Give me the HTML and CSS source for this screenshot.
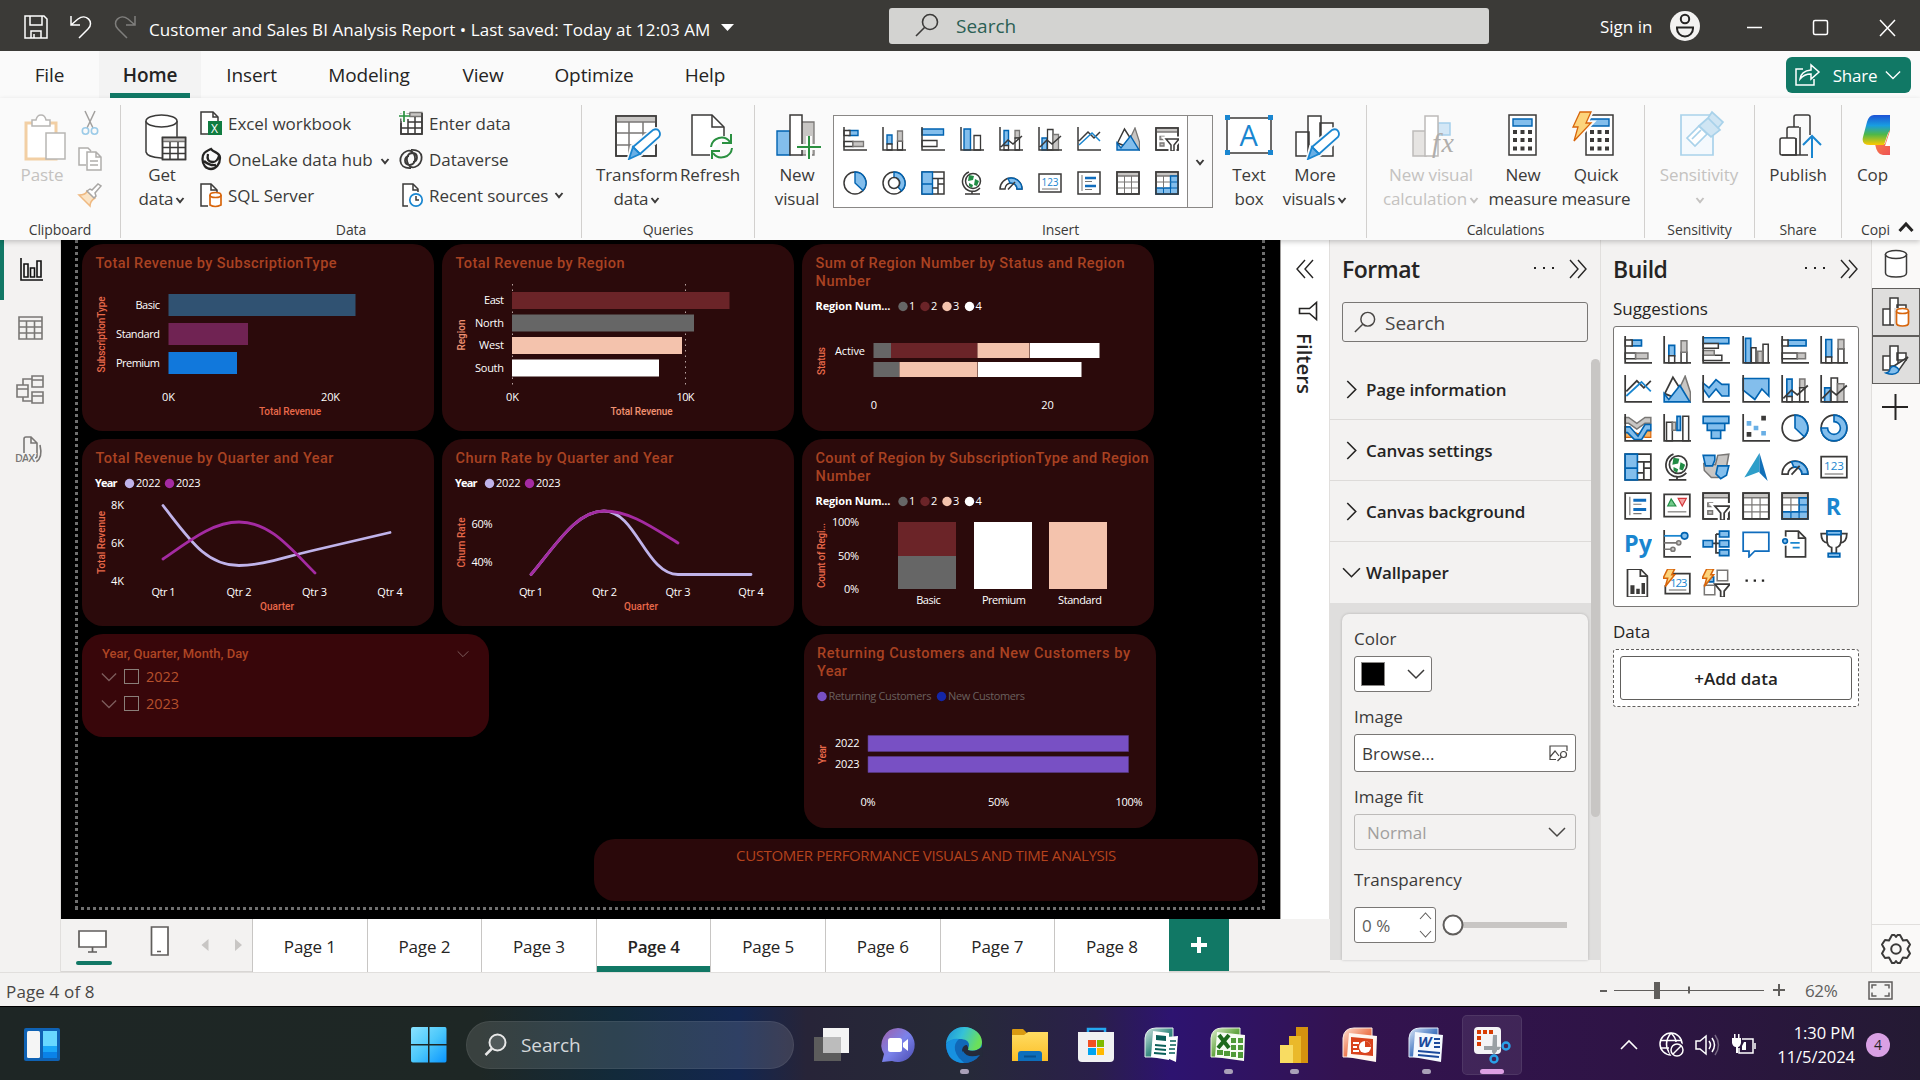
FILE: index.html
```html
<!DOCTYPE html>
<html lang="en">
<head>
<meta charset="utf-8">
<title>Customer and Sales BI Analysis Report</title>
<link rel="stylesheet" href="styles.css">
</head>
<body>
<svg class="defs" width="0" height="0" aria-hidden="true">
  <defs>
    <linearGradient id="gWin" x1="0" y1="0" x2="1" y2="1"><stop offset="0" stop-color="#8be3ff"/><stop offset=".5" stop-color="#4cc8fb"/><stop offset="1" stop-color="#0a95ff"/></linearGradient>
    <linearGradient id="gChat" x1="0" y1="0" x2="1" y2="1"><stop offset="0" stop-color="#a05fa8"/><stop offset=".5" stop-color="#7b83eb"/><stop offset="1" stop-color="#4a4bb0"/></linearGradient>
    <linearGradient id="gEdge" x1="0" y1="0" x2="1" y2=".3"><stop offset="0" stop-color="#1a8fd8"/><stop offset=".5" stop-color="#35c1d8"/><stop offset="1" stop-color="#6be05a"/></linearGradient>
    <linearGradient id="gFold" x1="0" y1="0" x2="0" y2="1"><stop offset="0" stop-color="#ffdc62"/><stop offset="1" stop-color="#fcbf27"/></linearGradient>
    <linearGradient id="gCop" x1="0" y1="0" x2="0" y2="1"><stop offset="0" stop-color="#1d52d6"/><stop offset=".35" stop-color="#189de0"/><stop offset=".65" stop-color="#4fb848"/><stop offset="1" stop-color="#ffc800"/></linearGradient>
    <linearGradient id="gCop2" x1="0" y1="0" x2="1" y2="1"><stop offset="0" stop-color="#ff9a3c"/><stop offset="1" stop-color="#e8395f"/></linearGradient>
    <linearGradient id="gPub" x1="0" y1="0" x2="1" y2="1"><stop offset="0" stop-color="#d5e8e5"/><stop offset=".5" stop-color="#3d8d84"/><stop offset="1" stop-color="#0a5f59"/></linearGradient>
    <linearGradient id="gXl" x1="0" y1="0" x2="1" y2="1"><stop offset="0" stop-color="#e2f1d2"/><stop offset=".5" stop-color="#68a845"/><stop offset="1" stop-color="#2b7a1f"/></linearGradient>
    <linearGradient id="gPpt" x1="0" y1="0" x2="1" y2="1"><stop offset="0" stop-color="#fde0d3"/><stop offset=".5" stop-color="#ef8059"/><stop offset="1" stop-color="#d8401a"/></linearGradient>
    <linearGradient id="gWd" x1="0" y1="0" x2="1" y2="1"><stop offset="0" stop-color="#dce7f7"/><stop offset=".5" stop-color="#4c7dc4"/><stop offset="1" stop-color="#143f8e"/></linearGradient>
  </defs>
</svg>
<svg class="symbols" aria-hidden="true">
  <symbol id="stackbar" viewBox="0 0 24 24"><path class="b" d="M6 3.500h9v5H6z"/><path class="w" d="M1 3.500h6v5H1zM1 14.500h9v5H1z"/><path class="g" d="M10 14.500h10.500v5H10z"/><path class="k" d="M1 0v23h23"/></symbol>
  <symbol id="stackcol" viewBox="0 0 24 24"><path class="b" d="M5 8h5v9H5z"/><path class="w" d="M5 17h5v6H5zM15.500 14h5v9h-5z"/><path class="g" d="M15.500 4h5v10h-5z"/><path class="k" d="M1 0v23h23"/></symbol>
  <symbol id="clusbar" viewBox="0 0 24 24"><path class="b" d="M1 2h21.500v6H1z"/><path class="w" d="M1 13.500h15v6H1z"/><path class="k" d="M1 0v23h23"/></symbol>
  <symbol id="clusbar2" viewBox="0 0 24 24"><path class="b" d="M1 1.500h22v5H1z"/><path class="w" d="M1 6.500h13v4H1zM1 16.500h16v4.500H1z"/><path class="g" d="M1 12.500h9.500v4H1z"/><path class="k" d="M1 0v23h23"/></symbol>
  <symbol id="cluscol" viewBox="0 0 24 24"><path class="b" d="M4 2h6.500v21H4z"/><path class="w" d="M14 8.500h6.500v14.500H14z"/><path class="k" d="M1 0v23h23"/></symbol>
  <symbol id="cluscol2" viewBox="0 0 24 24"><path class="b" d="M3 2h4.500v21H3z"/><path class="w" d="M8 10h4v13H8zM18 7h4.500v16H18z"/><path class="g" d="M13.500 13h4v10h-4z"/><path class="k" d="M1 0v23h23"/></symbol>
  <symbol id="fullbar" viewBox="0 0 24 24"><path class="b" d="M6 3.500h15.500v5H6z"/><path class="w" d="M1 3.500h5v5H1zM1 14.500h13v5H1z"/><path class="g" d="M14 14.500h7v5h-7z"/><path class="k" d="M1 0v23h23"/></symbol>
  <symbol id="fullcol" viewBox="0 0 24 24"><path class="b" d="M5 3h5v15H5z"/><path class="w" d="M5 18h5v5H5zM15.500 11h5v12h-5z"/><path class="g" d="M15.500 3h5v8h-5z"/><path class="k" d="M1 0v23h23"/></symbol>
  <symbol id="linestack" viewBox="0 0 24 24"><path class="b" d="M5 3.500h4.500v15H5z"/><path class="g" d="M16 3.500h4.500v7.500H16z"/><path class="w" d="M5 18.500h4.500V23H5zM16 11h4.500v12H16z"/><path class="k" d="M1 0v23h23M2 20l7-7 5 4 9-8"/></symbol>
  <symbol id="linecol" viewBox="0 0 24 24"><path class="b" d="M4 11h5v12H4z"/><path class="w" d="M9.500 2.500h5.500V23H9.500z"/><path class="g" d="M15 7.500h5.500V23H15z"/><path class="k" d="M1 0v23h23M2 20l7-7 5 4 9-8"/></symbol>
  <symbol id="line" viewBox="0 0 24 24"><path class="k" d="M1 0v23h23M2 14l9-9 6 6 6-6"/><path class="bl" d="M2 18l13-12 8 8"/></symbol>
  <symbol id="area" viewBox="0 0 24 24"><path class="g" d="M12 16l7-15 4.500 14v8z"/><path class="kw" d="M1.500 16L8.500 2l7 11-4 7z"/><path class="b" d="M1 23v-7l4 5 9.500-12L23 23z"/></symbol>
  <symbol id="stackarea" viewBox="0 0 24 24"><path class="b" d="M1 7l5 4 6-7 5 4h6v10h-6l-5-6-6 7-5-7z"/><path class="k" d="M1 0v23h23"/></symbol>
  <symbol id="fullarea" viewBox="0 0 24 24"><path class="b" d="M1 3h22v15l-6-6-6 9-10-8z"/><path class="k" d="M1 0v23h23"/></symbol>
  <symbol id="ribbonc" viewBox="0 0 24 24"><path class="o" d="M1 14h5l12 6h5v-5l-5-1-12 6H1z"/><path class="g" d="M1 3h3l7 5 7-5h5v5h-5l-7 5-7-5H1z"/><path class="b" d="M1 11h4l7 8 6-10h5v5h-3l-5 8H9l-6-6H1z"/><path class="k" d="M1 0v23h23"/></symbol>
  <symbol id="waterfall" viewBox="0 0 24 24"><path class="w" d="M3 7h5v16H3zM17 2h5v21h-5z"/><path class="g" d="M8 7h3v7H8z"/><path class="b" d="M12 2h3v12h-3z"/><path class="k" d="M1 0v23h23"/></symbol>
  <symbol id="funnelc" viewBox="0 0 24 24"><path class="b" d="M1 2h22v6H1zM4.500 8h15v6h-15zM8 14h8v7H8z"/></symbol>
  <symbol id="scatter" viewBox="0 0 24 24"><path class="k" d="M1 0v23h23"/><path fill="#3b3a39" d="M16.500 1.500h4v4h-4zM4 15.500h4v4H4z"/><path fill="#69afe5" d="M4 6h4v4H4zM10 10h4v4h-4zM16.500 14.500h4v4h-4z"/></symbol>
  <symbol id="pie" viewBox="0 0 24 24"><circle class="kw" cx="12" cy="12" r="11"/><path class="b" d="M12 1a11 11 0 0 1 8 18.500L12 12z"/></symbol>
  <symbol id="donut" viewBox="0 0 24 24"><circle class="kw" cx="12" cy="12" r="11"/><path class="b" d="M12 1a11 11 0 0 1 7.500 19l-3.500-4A5.500 5.500 0 0 0 12 6.500z"/><circle class="kw" cx="12" cy="12" r="5.500"/></symbol>
  <symbol id="donut2" viewBox="0 0 24 24"><circle class="kw" cx="12" cy="12" r="11"/><path class="b" d="M12 1a11 11 0 1 1-11 11h5.500a5.500 5.500 0 1 0 5.500-5.500z"/></symbol>
  <symbol id="treemap" viewBox="0 0 24 24"><path class="kw" d="M1 1h22v22H1z"/><path class="b" d="M1 1h10.500v22H1zM1 13h10.500"/><path class="k" d="M11.500 7.500H23M17 7.500V23M11.500 17H17M17 13h6"/></symbol>
  <symbol id="globe" viewBox="0 0 24 24"><circle class="kw" cx="13" cy="10" r="7.500"/><path fill="#218c45" d="M9 4l5 1-1 4-5 1zM15 8l4 2-2 5-3-1zM9 12l4 2-1 3-3-2z"/><path class="k" d="M9 1a10 10 0 1 0 11 16M12 20v3M5 23h15"/></symbol>
  <symbol id="shapemap" viewBox="0 0 24 24"><path class="g" d="M1.500 9l10 1 2-8 9.500-1-2 11-7 9H8l-6-6z"/><path class="b" d="M1 2h10v4l-2 5H3zM13.500 11H23l-2 8-5 3-4-4z"/></symbol>
  <symbol id="azure" viewBox="0 0 24 24"><path fill="#2d9ec9" d="M15 0v16L2 21z"/><path fill="#1270b8" d="M15 0l7 24-7-7z"/></symbol>
  <symbol id="gauge" viewBox="0 0 24 24"><path class="kw" d="M1 18a11 11 0 0 1 22 0h-5a6 6 0 0 0-12 0z"/><path class="b" d="M9 7.500A11 11 0 0 1 23 18h-5a6 6 0 0 0-7-6z"/><path class="k" d="M9 18.500l7-7.500" stroke-width="3"/></symbol>
  <symbol id="card" viewBox="0 0 24 24"><path class="kw" d="M1 3h22v18H1z"/><path stroke="#797775" d="M4 18h16"/><text class="ti" x="3.500" y="14.500" font-size="10" textLength="17">123</text></symbol>
  <symbol id="multicard" viewBox="0 0 24 24"><path class="kw" d="M1 1h22v22H1z"/><path stroke="#797775" d="M5 4v16M8 10.500h7M8 18.500h7"/><path stroke="#0f6cbd" stroke-width="2.500" d="M8 7h11M8 15h11"/></symbol>
  <symbol id="kpi" viewBox="0 0 24 24"><path class="kw" d="M1 2h22v19H1z"/><path stroke="#797775" d="M4 17h16"/><path fill="#72c98a" stroke="#218c45" d="M4 12l3-6 4 6z"/><path fill="#f6a3a3" stroke="#d13438" d="M13 5.500h7L16.500 12z"/></symbol>
  <symbol id="slicer" viewBox="0 0 24 24"><path class="kw" d="M1 1h22v22H1z"/><path class="g" d="M1 1h22v4H1zM5 9.500h4v3H5zM5 16h4v3H5z"/><path class="k" d="M1 1h22v22H1z"/><path fill="#fff" stroke="#fff" stroke-width="5" d="M11 12h13l-5 6v6h-3v-6z"/><path class="kw" d="M11 12h13l-5 6v6h-3v-6z"/></symbol>
  <symbol id="table" viewBox="0 0 24 24"><path class="kw" d="M1 1h22v22H1z"/><path class="g" d="M1 1h22v4H1z"/><path stroke="#797775" d="M8.500 5v18M15.500 5v18M1 11h22M1 17h22"/><path class="k" d="M1 1h22v22H1z"/></symbol>
  <symbol id="matrix" viewBox="0 0 24 24"><path class="kw" d="M1 1h22v22H1z"/><path class="g" d="M1 1h22v4H1z"/><path class="b" d="M15.500 5H23v18H1v-6h14.500z"/><path stroke="#0063b1" d="M8.500 17v6M15.500 17v6M15.500 11H23M15.500 17H23"/><path stroke="#797775" d="M8.500 5v12M1 11h14.500"/><path class="k" d="M1 1h22v22H1z"/></symbol>
  <symbol id="rvis" viewBox="0 0 24 24"><text class="ti tb" x="5" y="19.500" font-size="20" textLength="13" lengthAdjust="spacingAndGlyphs">R</text></symbol>
  <symbol id="pyvis" viewBox="0 0 24 24"><text class="ti tb" x="0" y="18.500" font-size="20" textLength="24" lengthAdjust="spacingAndGlyphs">Py</text></symbol>
  <symbol id="influ" viewBox="0 0 24 24"><path class="k" d="M1 0v23h23"/><path class="bl" d="M1 5h15"/><path stroke="#797775" stroke-width="1.400" d="M1 11h11M1 16.500h6"/><circle class="b" cx="18.500" cy="5" r="2.800"/><circle class="g" cx="13.500" cy="11" r="1.800"/><circle class="g" cx="8.500" cy="16.500" r="1.800"/></symbol>
  <symbol id="decomp" viewBox="0 0 24 24"><path class="k" d="M9 11.500h6M12 3.500v16h3M12 3.500h3"/><path class="b" d="M1 9h8v5.500H1zM15 1h8v5h-8zM15 9h8v5.500h-8zM15 17h8v5h-8z"/></symbol>
  <symbol id="qna" viewBox="0 0 24 24"><path fill="#fff" stroke="#0f6cbd" stroke-width="1.500" d="M1 2h22v16H11l-5 5v-5H1z"/></symbol>
  <symbol id="narr" viewBox="0 0 24 24"><path class="kw" d="M4 1h11l6 6v16H4z"/><path class="k" d="M15 1v6h6"/><path class="bl" d="M8 11h8M10 15h6"/><circle fill="#fff" cx="3.500" cy="9.500" r="4"/><circle class="b" cx="3.500" cy="9.500" r="2"/></symbol>
  <symbol id="goals" viewBox="0 0 24 24"><path class="kw" d="M6 1h12v8q0 5-4 6v5h-4v-5q-4-1-4-6z"/><path class="k" d="M6 3H1q0 8 6 8M18 3h5q0 8-6 8"/><path class="b" d="M6 1h12v3H6zM7 20h10v3H7z"/></symbol>
  <symbol id="pagin" viewBox="0 0 24 24"><path class="kw" d="M3 0h11l6 6v18H3z"/><path class="k" d="M14 0v6h6"/><path fill="#3b3a39" d="M5.500 14H9v7.500H5.500zM10.500 17h3v4.500h-3zM15 12h3v9.500h-3z"/></symbol>
  <symbol id="ncard" viewBox="0 0 24 24"><path class="kw" d="M8 4h15v17H2v-7"/><path stroke="#797775" d="M5 18h15"/><text class="ti" x="6" y="15" font-size="10" textLength="15">123</text><path class="bolt" d="M4 0h6L7.500 5H10L2 15l2-7H0z"/></symbol>
  <symbol id="nslicer" viewBox="0 0 24 24"><path class="b" d="M6 7h4v4H6z"/><path class="gw" d="M13 1h9v9h-9zM2 14h9v8H2z"/><path class="kw" d="M11 13h13l-5 6v5h-3v-5z"/><path class="bolt" d="M4 0h6L7.500 5H10L2 15l2-7H0z"/></symbol>
  <symbol id="more" viewBox="0 0 24 24"><path fill="#252423" d="M3 9h2v2H3zM10 9h2v2h-2zM17 9h2v2h-2z"/></symbol>
  <symbol id="chev" viewBox="0 0 10 10"><path fill="none" stroke="currentColor" stroke-width="1.900" d="M1.500 3L5 7.200 8.500 3"/></symbol>
  <symbol id="vee" viewBox="0 0 18 18"><path fill="none" stroke="currentColor" stroke-width="1.500" d="M1 5l8 8 8-8"/></symbol>
  <symbol id="mag" viewBox="0 0 24 24"><circle fill="none" stroke="currentColor" stroke-width="1.600" cx="15" cy="9" r="7.500"/><path fill="none" stroke="currentColor" stroke-width="1.600" d="M9.500 14.500L1 23"/></symbol>
  <symbol id="dbl" viewBox="0 0 20 20"><path fill="none" stroke="currentColor" stroke-width="1.400" d="M2 1l8 9-8 9M10 1l8 9-8 9"/></symbol>
  <symbol id="pencil" viewBox="0 0 48 48"><path stroke="#fafafa" stroke-width="6" fill="#fafafa" d="M17 46l3-11 20-16q4-2 6 1t0 6L27 42z"/><path fill="#fff" stroke="#1a86d0" stroke-width="1.800" d="M20 35l20-17q4-2 6 1t0 6L27 42z"/><path fill="#69afe5" stroke="#1a86d0" stroke-width="1.800" d="M16 47l4-12 7 7z"/></symbol>
  <symbol id="calc" viewBox="0 0 48 48"><path class="kw" stroke-width="2" d="M10 3h27v40H10z"/><path class="b" d="M14 7h19v7H14z"/><path fill="#3b3a39" d="M14 18h4v4h-4zM21.500 18h4v4h-4zM29 18h4v4h-4zM14 26h4v4h-4zM21.500 26h4v4h-4zM29 26h4v4h-4zM14 34.500h4v4h-4zM21.500 34.500h4v4h-4zM29 34.500h4v4h-4z"/></symbol>
</svg>

<header class="titlebar">
  <svg class="ic-save" width="24" height="24" viewBox="0 0 24 24"><path class="wl" d="M1 1h19l3 3v19H1zM6 1v9h12V1M7 23v-7h10v7M10 19v4"/></svg>
  <svg class="ic-undo" width="22" height="24" viewBox="0 0 22 24"><path class="wl" d="M1 1v9h9M1 10l7-6c8-6 17 3 10 10l-9 9"/></svg>
  <svg class="ic-redo" width="22" height="24" viewBox="0 0 22 24"><path class="wl dim" d="M21 1v9h-9M21 10l-7-6C6-2-3 7 4 14l9 9"/></svg>
  <span class="doc">Customer and Sales BI Analysis Report • Last saved: Today at 12:03 AM</span>
  <svg class="ic-caret" width="13" height="7"><path fill="#fff" d="M0 0h13L6.500 7z"/></svg>
  <div class="topsearch"><svg width="24" height="24"><use href="#mag"/></svg><span>Search</span></div>
  <span class="signin">Sign in</span>
  <svg class="ic-user" width="30" height="30" viewBox="0 0 30 30"><circle cx="15" cy="15" r="15" fill="#f3f2f1"/><circle class="uk" cx="15" cy="8" r="4.200"/><path class="uk" d="M7 16.500h16v1a8 8 0 0 1-16 0z"/></svg>
  <svg class="ic-win" width="150" height="20" viewBox="0 0 150 20"><path class="wl" d="M1 9.500h15M134 2l15 16M149 2l-15 16"/><rect class="wl" x="67.500" y="2.500" width="14" height="14" rx="1.500"/></svg>
</header>

<nav class="tabs">
  <span class="tab t-file">File</span><span class="tab on">Home</span><span class="tab t-ins">Insert</span><span class="tab t-mod">Modeling</span><span class="tab t-view">View</span><span class="tab t-opt">Optimize</span><span class="tab t-help">Help</span>
  <button class="share"><svg width="25" height="22" viewBox="0 0 25 22"><path class="wl" d="M8 5H1v16h18v-6M5 15q1-8 11-9V1l8 7-8 7v-5q-7 0-11 5z"/></svg><span>Share</span><svg width="16" height="16"><use href="#vee"/></svg></button>
</nav>

<section class="ribbon">
  <div class="group g-clip">
    <div class="tools">
      <div class="big off"><svg width="48" height="48" viewBox="0 0 48 48"><path fill="#fff" stroke="#f2cfa4" stroke-width="3" d="M8 11h30v36H8z"/><path fill="#fff" stroke="#b8b6b4" stroke-width="1.500" d="M14 8h4q1-5 5-5t5 5h4v6H14zM28 21h19v26H28z"/></svg><span>Paste</span></div>
      <div class="minis">
        <svg width="24" height="24" viewBox="0 0 24 24"><path stroke="#a19f9d" fill="none" stroke-width="1.500" d="M7 0l8 17M17 0L9 17"/><circle class="lb" cx="7.500" cy="20" r="3.200"/><circle class="lb" cx="16.500" cy="20" r="3.200"/></svg>
        <svg width="24" height="24" viewBox="0 0 24 24"><path fill="#fff" stroke="#b0aeac" stroke-width="1.500" d="M8 18H1V1h9l3 3M9 5h9l5 5v13H9zM12 14h8M12 18h8M18 5v5h5"/></svg>
        <svg width="24" height="24" viewBox="0 0 24 24"><path fill="#fbe3c4" stroke="#efb981" stroke-width="1.500" d="M1 12q7 0 8-4l8 7q-5 3-5 8z"/><path fill="#fff" stroke="#a8a6a4" stroke-width="1.500" d="M9 8l3-2 2 1 6-6 3 2-6 7 1 3-2 2z"/></svg>
      </div>
    </div>
    <div class="glabel">Clipboard</div>
  </div>
  <div class="group g-data">
    <div class="tools">
      <div class="big"><svg width="48" height="48" viewBox="0 0 48 48"><path class="kw" d="M8 9v31q1 5 15 6h4V28h12V9"/><ellipse class="kw" cx="23.500" cy="9" rx="15.500" ry="6"/><path class="kw" d="M24.500 25.500h23v22h-23z"/><path class="g" d="M24.500 25.500h23v4h-23z"/><path class="k" d="M24.500 25.500h23v22h-23zM32 30v17M40 30v17M25 35.500h22M25 41.500h22"/></svg><span>Get<br>data<svg class="cv" width="10" height="10"><use href="#chev"/></svg></span></div>
      <div class="rows r1">
        <div class="row"><svg width="24" height="24" viewBox="0 0 24 24"><path class="kw" d="M8 23H1V1h12l5 5v4"/><path class="k" d="M13 1v5h5"/><path fill="#107c41" d="M8 10h14v14H8z"/><text x="11" y="21.500" font-size="12" fill="#fff">X</text></svg>Excel workbook</div>
        <div class="row"><svg width="24" height="24" viewBox="0 0 24 24"><path class="kk" d="M11 2c3 4 9 3 9 9s-4 11-9 11-8.500-4-8.500-10S5 5 11 2zM8 7q-2 8 5 8 4 0 6-6M4 14q6 5 12 4"/></svg>OneLake data hub<svg class="cv" width="10" height="10"><use href="#chev"/></svg></div>
        <div class="row"><svg width="24" height="24" viewBox="0 0 24 24"><path class="kw" d="M8 23H1V1h10l6 6v2"/><path class="k" d="M11 1v6h6"/><path fill="#fff" stroke="#d8650b" stroke-width="1.700" d="M10 12v10q5 3 11 0V12"/><ellipse fill="#fff" stroke="#d8650b" stroke-width="1.700" cx="15.500" cy="12" rx="5.500" ry="2.500"/></svg>SQL Server</div>
      </div>
      <div class="rows r2">
        <div class="row"><svg width="24" height="24" viewBox="0 0 24 24"><path class="kw" d="M2 3h21v20H2z"/><path class="g" d="M11 1.500h12v4H11z"/><path class="k" d="M2 12v11h21V2M9 8v15M16 6v17M2 17h21M9 11h14"/><path stroke="#fafafa" stroke-width="5" d="M5 0v10M0 5h10"/><path stroke="#2a9040" stroke-width="1.700" d="M5 0v11M0 5h11"/></svg>Enter data</div>
        <div class="row"><svg width="24" height="24" viewBox="0 0 24 24"><path class="k dv" d="M12 21c-14 1-13-14-4-17 8-3 12 13 3 14-7 0-6-9-1-9M12 3c14-1 13 14 4 17-8 3-12-13-3-14 7 0 6 9 1 9"/></svg>Dataverse</div>
        <div class="row"><svg width="24" height="24" viewBox="0 0 24 24"><path class="kw" d="M9 23H4V1h10l5 5v3"/><path class="k" d="M14 1v6h5"/><circle fill="#fff" stroke="#1a86d0" stroke-width="1.700" cx="17" cy="17" r="6.200"/><path class="k" d="M17 13v4h3"/></svg>Recent sources<svg class="cv" width="10" height="10"><use href="#chev"/></svg></div>
      </div>
    </div>
    <div class="glabel">Data</div>
  </div>
  <div class="group g-query">
    <div class="tools">
      <div class="big b-tr"><svg width="48" height="48" viewBox="0 0 48 48"><path class="kw" d="M3 4h40v40H3z"/><path class="g" d="M3 4h40v6H3z"/><path stroke="#797775" stroke-width="1.500" d="M16 10v34M30 10v34M3 21h40M3 33h40"/><path class="k" d="M3 4h40v40H3z"/><use href="#pencil"/></svg><span>Transform<br>data<svg class="cv" width="10" height="10"><use href="#chev"/></svg></span></div>
      <div class="big b-rf"><svg width="48" height="48" viewBox="0 0 48 48"><path class="kw" d="M24 43H6V3h20l12 12v9"/><path class="k" d="M26 3v12h12"/><path fill="none" stroke="#2a9040" stroke-width="2" d="M25 35a10.500 10.500 0 0 1 19-5M45 22v9h-9M46 36a10.500 10.500 0 0 1-19 5M26 47v-8h8"/></svg><span>Refresh</span></div>
    </div>
    <div class="glabel">Queries</div>
  </div>
  <div class="group g-ins">
    <div class="tools">
      <div class="big b-nv"><svg width="48" height="48" viewBox="0 0 48 48"><path class="g" d="M28 10h13v33H28z"/><path class="b" d="M4 19h13v24H4z"/><path class="kw" d="M17 3h12v40H17z"/><path stroke="#fafafa" stroke-width="6" d="M36 24v23M24 35h24"/><path stroke="#2a9040" stroke-width="2" d="M36 24v23M24 35h24"/></svg><span>New<br>visual</span></div>
      <div class="gallery">
        <div class="ggrid">
          <svg><use href="#stackbar"/></svg><svg><use href="#stackcol"/></svg><svg><use href="#clusbar"/></svg><svg><use href="#cluscol"/></svg><svg><use href="#linestack"/></svg><svg><use href="#linecol"/></svg><svg><use href="#line"/></svg><svg><use href="#area"/></svg><svg><use href="#slicer"/></svg>
          <svg><use href="#pie"/></svg><svg><use href="#donut"/></svg><svg><use href="#treemap"/></svg><svg><use href="#globe"/></svg><svg><use href="#gauge"/></svg><svg><use href="#card"/></svg><svg><use href="#multicard"/></svg><svg><use href="#table"/></svg><svg><use href="#matrix"/></svg>
        </div>
        <div class="gmore"><svg width="10" height="10"><use href="#chev"/></svg></div>
      </div>
      <div class="big b-tx"><svg width="48" height="48" viewBox="0 0 48 48"><path class="kw" d="M2 6h44v35H2z"/><path fill="#1a86d0" d="M0 3h5v5H0zM43 3h5v5h-5zM0 38h5v5H0zM43 38h5v5h-5z"/><text class="ti" x="14.500" y="34" font-size="29" textLength="18">A</text></svg><span>Text<br>box</span></div>
      <div class="big b-mv"><svg width="48" height="48" viewBox="0 0 48 48"><path class="kw" d="M28 11h13v33H28zM4 20h13v24H4zM16 4h13v40H16z"/><use href="#pencil"/></svg><span>More<br>visuals<svg class="cv" width="10" height="10"><use href="#chev"/></svg></span></div>
    </div>
    <div class="glabel">Insert</div>
  </div>
  <div class="group g-calc">
    <div class="tools">
      <div class="big off b-nc"><svg width="48" height="48" viewBox="0 0 48 48"><path fill="#d3e7f6" stroke="#a5cfec" stroke-width="1.500" d="M30 11h12v12H30z"/><path fill="#e6e4e2" stroke="#bdbbb9" stroke-width="1.500" d="M5 19h13v25H5z"/><path fill="#fff" stroke="#bdbbb9" stroke-width="1.500" d="M17 4h13v40H17z"/><text x="24" y="40" class="fx" textLength="22">fx</text></svg><span>New visual<br>calculation<svg class="cv" width="10" height="10"><use href="#chev"/></svg></span></div>
      <div class="big b-nm"><svg width="48" height="48" viewBox="0 0 48 48"><use href="#calc"/></svg><span>New<br>measure</span></div>
      <div class="big b-qm"><svg width="48" height="48" viewBox="0 0 48 48"><use href="#calc" x="4"/><path stroke="#fafafa" stroke-width="5" d="M8 0h11l-5 11h5L2 29l4-14H1z"/><path class="bolt" stroke-width="1.800" d="M8 0h11l-5 11h5L2 29l4-14H1z"/></svg><span>Quick<br>measure</span></div>
    </div>
    <div class="glabel">Calculations</div>
  </div>
  <div class="group g-sens">
    <div class="tools"><div class="big off"><svg width="48" height="48" viewBox="0 0 48 48"><path fill="#f4f9fd" stroke="#a9d2ea" stroke-width="1.700" d="M6 3h32v40H6z"/><path fill="#fff" stroke="#a9d2ea" stroke-width="1.700" d="M12 26l12-12 8 8-12 12zM17 27l9-9"/><path fill="#cfe5f3" stroke="#a9d2ea" stroke-width="1.700" d="M24 14l9-8 12 12-9 7zM33 6l4-6 11 10-5 6z"/></svg><span>Sensitivity<br><svg class="cv" width="10" height="10"><use href="#chev"/></svg></span></div></div>
    <div class="glabel">Sensitivity</div>
  </div>
  <div class="group g-share">
    <div class="tools"><div class="big"><svg width="48" height="48" viewBox="0 0 48 48"><path class="kw" d="M8 43q-2 0-2-2V28q0-2 2-2h12q2 0 2 2v15z"/><path class="k" d="M13 26V17q0-2 2-2h10M20 15V5q0-2 2-2h12q2 0 2 2v18M8 43h26M26 15v28M22 26v17"/><path fill="none" stroke="#1a86d0" stroke-width="2" d="M38 46V24M29 33l9-9 9 9"/></svg><span>Publish</span></div></div>
    <div class="glabel">Share</div>
  </div>
  <div class="group g-cop">
    <div class="tools"><div class="big"><svg width="48" height="48" viewBox="0 0 48 48"><path fill="url(#gCop2)" d="M13 32h10l7-22h14v33H21q-6 0-8-11z"/><path fill="url(#gCop)" d="M12 3h28v10q-12 0-15 11l-3 9H8Q-1 33 1 25L5 10Q7 3 12 3z"/><path fill="#fff" d="M30 13h9l-8 21h-8z"/></svg><span>Cop</span></div></div>
    <div class="glabel">Copi</div>
  </div>
  <svg class="collapse" width="16" height="12" viewBox="0 0 16 12"><path fill="none" stroke="#252423" stroke-width="3" d="M1.500 10L8 3l6.500 7"/></svg>
</section>

<main class="work">
  <aside class="rail">
    <div class="cell on"><svg width="26" height="26" viewBox="0 0 26 26"><path fill="none" stroke="#111" stroke-width="1.600" d="M2 1v22h22M5 7h4v13H5zM11.500 11h4v9h-4zM18 4h4v16h-4z"/></svg></div>
    <div class="cell"><svg width="26" height="26" viewBox="0 0 26 26"><path class="rg" d="M2 2h23v22H2zM2 6h23M2 12h23M2 18h23M9.500 6v18M17.500 6v18"/></svg></div>
    <div class="cell c3"><svg width="30" height="30" viewBox="0 0 30 30"><path class="rg" d="M2 11h11v12H2zM2 15h11M17 2h11v11H17zM17 6h11M17 18h11v11H17zM17 22h11M8 11V5h9M8 23v4h9"/></svg></div>
    <div class="cell"><svg width="28" height="28" viewBox="0 0 28 28"><path class="rg" d="M9 17V3q0-2 2-2h5l6 6v13q0 2-2 2M16 1v6h6M25 9q3 13-4 17"/><text class="dax" x="0" y="26" textLength="20">DAX</text></svg></div>
  </aside>

  <section class="center">
    <div class="canvas">
      <div class="page">
        <div class="cards">
          <svg class="card" viewBox="82 244 352 187">
            <text class="ct" x="95.500" y="268" textLength="241">Total Revenue by SubscriptionType</text>
            <path fill="#305272" d="M168.500 294H355.500v22H168.500z"/><path fill="#702353" d="M168.500 323H248v22h-79.500z"/><path fill="#1178dc" d="M168.500 352H237v22h-68.500z"/>
            <text class="ax e" x="160" y="309" textLength="24.500">Basic</text><text class="ax e" x="160" y="338" textLength="44">Standard</text><text class="ax e" x="160" y="367" textLength="44">Premium</text>
            <text class="ax m" x="168.500" y="401" textLength="13">0K</text><text class="ax m" x="330.500" y="401" textLength="19">20K</text>
            <text class="at m" x="290" y="415" textLength="62">Total Revenue</text>
            <text class="at m" transform="translate(104.500 334.500) rotate(-90)" textLength="76">SubscriptionType</text>
          </svg>
          <svg class="card" viewBox="442 244 352 187">
            <text class="ct" x="455.500" y="268" textLength="169">Total Revenue by Region</text>
            <path stroke="#b8a4a2" stroke-dasharray="1.500 4" d="M512.500 284v104M685.500 284v104"/>
            <path fill="#6b2428" d="M512 292h217.500v17H512z"/><path fill="#666" d="M512 314.500h182v17H512z"/><path fill="#f4c3ad" d="M512 337h170v17H512z"/><path fill="#fff" d="M512 359.500h147v17H512z"/>
            <text class="ax e" x="504" y="304" textLength="20">East</text><text class="ax e" x="504" y="327" textLength="29">North</text><text class="ax e" x="504" y="349" textLength="25">West</text><text class="ax e" x="504" y="372" textLength="29">South</text>
            <text class="ax m" x="512.500" y="401" textLength="13">0K</text><text class="ax m" x="685.500" y="401" textLength="18">10K</text>
            <text class="at m li" x="641.500" y="415" textLength="62">Total Revenue</text>
            <text class="at m li" transform="translate(464.500 335) rotate(-90)" textLength="31">Region</text>
          </svg>
          <svg class="card" viewBox="802 244 352 187">
            <text class="ct" x="815.500" y="268" textLength="309">Sum of Region Number by Status and Region</text><text class="ct" x="815.500" y="286" textLength="55">Number</text>
            <text class="ax bd" x="815.500" y="310" textLength="75">Region Num...</text>
            <circle fill="#666" cx="903" cy="306.500" r="4.700"/><circle fill="#6b2428" cx="925" cy="306.500" r="4.700"/><circle fill="#f4c3ad" cx="947" cy="306.500" r="4.700"/><circle fill="#fff" cx="969.500" cy="306.500" r="4.700"/>
            <text class="ax lg" x="909" y="310">1</text><text class="ax lg" x="931" y="310">2</text><text class="ax lg" x="953" y="310">3</text><text class="ax lg" x="975.500" y="310">4</text>
            <path fill="#666" d="M873.500 343H891v15h-17.500zM873.500 362H899.500v15h-26z"/><path fill="#6b2428" d="M891 343h86.500v15H891z"/><path fill="#f4c3ad" d="M977.500 343h52v15h-52zM899.500 362h78v15h-78z"/><path fill="#fff" d="M1030 343h69.500v15H1030zM978 362h103.500v15H978z"/>
            <text class="ax e" x="865" y="355" textLength="30">Active</text>
            <text class="at m" transform="translate(824.500 361) rotate(-90)" textLength="28">Status</text>
            <text class="ax m" x="874" y="409">0</text><text class="ax m" x="1047.500" y="409" textLength="12.500">20</text>
          </svg>
          <svg class="card" viewBox="82 439 352 187">
            <text class="ct" x="95.500" y="463" textLength="238">Total Revenue by Quarter and Year</text>
            <text class="ax bd" x="95" y="487" textLength="22.500">Year</text><circle fill="#c0b3ea" cx="129.500" cy="483.500" r="4.700"/><circle fill="#a42ba2" cx="169.500" cy="483.500" r="4.700"/>
            <text class="ax lg" x="136" y="487" textLength="24.500">2022</text><text class="ax lg" x="176" y="487" textLength="24.500">2023</text>
            <text class="ax e" x="124" y="509" textLength="13">8K</text><text class="ax e" x="124" y="547" textLength="13">6K</text><text class="ax e" x="124" y="585" textLength="13">4K</text>
            <path class="ln" stroke="#c0b3ea" d="M163 505.500C190 540 206 565.500 239 565.500 262 565.500 284 557 315 550L390 532.500"/>
            <path class="ln" stroke="#a42ba2" d="M163 559C188 542 212 522 239 522 270 522 290 548 315 573"/>
            <text class="ax m" x="163.500" y="596" textLength="24">Qtr 1</text><text class="ax m" x="239" y="596" textLength="25">Qtr 2</text><text class="ax m" x="314.500" y="596" textLength="25">Qtr 3</text><text class="ax m" x="390" y="596" textLength="25.500">Qtr 4</text>
            <text class="at m" x="277" y="610" textLength="34">Quarter</text>
            <text class="at m" transform="translate(104.500 542.500) rotate(-90)" textLength="63">Total Revenue</text>
          </svg>
          <svg class="card" viewBox="442 439 352 187">
            <text class="ct" x="455.500" y="463" textLength="218">Churn Rate by Quarter and Year</text>
            <text class="ax bd" x="455" y="487" textLength="22.500">Year</text><circle fill="#c0b3ea" cx="489.500" cy="483.500" r="4.700"/><circle fill="#a42ba2" cx="529.500" cy="483.500" r="4.700"/>
            <text class="ax lg" x="496" y="487" textLength="24.500">2022</text><text class="ax lg" x="536" y="487" textLength="24.500">2023</text>
            <text class="ax e" x="492.500" y="528" textLength="21">60%</text><text class="ax e" x="492.500" y="566" textLength="21">40%</text>
            <path class="ln" stroke="#c0b3ea" d="M531 574.500C556 545 576 511 604 511 636 511 646 574.500 678 574.500H751"/>
            <path class="ln" stroke="#a42ba2" d="M531 574.500C556 545 576 511 604 511 630 511 652 527 678 543"/>
            <text class="ax m" x="531" y="596" textLength="24">Qtr 1</text><text class="ax m" x="604.500" y="596" textLength="25">Qtr 2</text><text class="ax m" x="678" y="596" textLength="25">Qtr 3</text><text class="ax m" x="751" y="596" textLength="25.500">Qtr 4</text>
            <text class="at m" x="641" y="610" textLength="34">Quarter</text>
            <text class="at m" transform="translate(464.500 542.500) rotate(-90)" textLength="50">Churn Rate</text>
          </svg>
          <svg class="card" viewBox="802 439 352 187">
            <text class="ct" x="815.500" y="463" textLength="333">Count of Region by SubscriptionType and Region</text><text class="ct" x="815.500" y="481" textLength="55">Number</text>
            <text class="ax bd" x="815.500" y="505" textLength="75">Region Num...</text>
            <circle fill="#666" cx="903" cy="501.500" r="4.700"/><circle fill="#6b2428" cx="925" cy="501.500" r="4.700"/><circle fill="#f4c3ad" cx="947" cy="501.500" r="4.700"/><circle fill="#fff" cx="969.500" cy="501.500" r="4.700"/>
            <text class="ax lg" x="909" y="505">1</text><text class="ax lg" x="931" y="505">2</text><text class="ax lg" x="953" y="505">3</text><text class="ax lg" x="975.500" y="505">4</text>
            <text class="ax e" x="859" y="526" textLength="27">100%</text><text class="ax e" x="859" y="560" textLength="21">50%</text><text class="ax e" x="859" y="593" textLength="15">0%</text>
            <path fill="#6b2428" d="M898 522h58v34h-58z"/><path fill="#666" d="M898 556h58v33h-58z"/><path fill="#fff" d="M974 522h58v67h-58z"/><path fill="#f4c3ad" d="M1049 522h58v67h-58z"/>
            <text class="ax m" x="928.500" y="604" textLength="24.500">Basic</text><text class="ax m" x="1004" y="604" textLength="44">Premium</text><text class="ax m" x="1080" y="604" textLength="44">Standard</text>
            <text class="at m" transform="translate(824.500 555.500) rotate(-90)" textLength="65">Count of Regi...</text>
          </svg>
        </div>
        <div class="row3">
          <div class="slicer">
            <div class="sl-h"><span>Year, Quarter, Month, Day</span><svg width="12" height="12"><use href="#vee"/></svg></div>
            <div class="sl-r"><svg width="16" height="16"><use href="#vee"/></svg><i></i><span>2022</span></div>
            <div class="sl-r"><svg width="16" height="16"><use href="#vee"/></svg><i></i><span>2023</span></div>
          </div>
          <svg class="card tall" viewBox="804 634 352 194">
            <text class="ct" x="817" y="658" textLength="313">Returning Customers and New Customers by</text><text class="ct" x="817" y="676" textLength="30">Year</text>
            <circle fill="#7850c4" cx="822" cy="696.500" r="4.700"/><circle fill="#1426a6" cx="941.500" cy="696.500" r="4.700"/>
            <text class="ax gy" x="828.500" y="700" textLength="103">Returning Customers</text><text class="ax gy" x="948" y="700" textLength="77">New Customers</text>
            <path fill="#7850c4" stroke="#5a3a8a" stroke-width=".6" d="M868 735.500h260.500v16H868zM868 756.500h260.500v16H868z"/>
            <text class="ax e" x="859.500" y="747" textLength="24.500">2022</text><text class="ax e" x="859.500" y="768" textLength="24.500">2023</text>
            <text class="at m" transform="translate(825.500 754.500) rotate(-90)" textLength="19">Year</text>
            <text class="ax m" x="868" y="806" textLength="15">0%</text><text class="ax m" x="998.500" y="806" textLength="21">50%</text><text class="ax m" x="1129" y="806" textLength="27">100%</text>
          </svg>
        </div>
        <div class="banner">CUSTOMER PERFORMANCE VISUALS AND TIME ANALYSIS</div>
      </div>
    </div>
    <div class="filters">
      <svg class="flip" width="20" height="20"><use href="#dbl"/></svg>
      <svg width="20" height="20" viewBox="0 0 20 20"><path fill="none" stroke="#252423" stroke-width="1.600" d="M18.500 1.500v17l-7-6h-10v-5h10z"/></svg>
      <span>Filters</span>
    </div>
    <div class="pagetabs">
      <div class="views">
        <svg width="191" height="53" viewBox="0 0 191 53"><path class="mk" d="M18 12h27v16H18zM27 33h9M31.500 28v5M90.500 8H107v28H90.500zM96 32.500h4"/><rect x="15" y="42" width="36" height="4" rx="2" fill="#117865"/><path fill="#c8c6c4" d="M147.500 20v12l-7-6zM174 20v12l7-6z"/></svg>
      </div>
      <span class="pt">Page 1</span><span class="pt">Page 2</span><span class="pt">Page 3</span><span class="pt on">Page 4</span><span class="pt">Page 5</span><span class="pt">Page 6</span><span class="pt">Page 7</span><span class="pt">Page 8</span>
      <span class="plus"><svg width="18" height="18"><path stroke="#fff" stroke-width="4" d="M9 1v16M1 9h16"/></svg></span>
    </div>
  </section>

  <section class="pane format">
    <div class="phead"><h2>Format</h2><svg width="24" height="6"><path fill="#252423" d="M1 1h2v2H1zM10 1h2v2h-2zM19 1h2v2h-2z"/></svg><svg width="20" height="20"><use href="#dbl"/></svg></div>
    <div class="psearch"><svg width="22" height="22"><use href="#mag"/></svg><span>Search</span></div>
    <div class="acc">
      <div class="item"><svg class="rt" width="19" height="19"><use href="#vee"/></svg>Page information</div>
      <div class="item"><svg class="rt" width="19" height="19"><use href="#vee"/></svg>Canvas settings</div>
      <div class="item"><svg class="rt" width="19" height="19"><use href="#vee"/></svg>Canvas background</div>
      <div class="item last"><svg width="19" height="19"><use href="#vee"/></svg>Wallpaper</div>
      <div class="well"><div class="form">
        <label>Color</label>
        <div class="box color"><b></b><svg width="18" height="18"><use href="#vee"/></svg></div>
        <label>Image</label>
        <div class="box browse"><span>Browse...</span><svg width="19" height="17" viewBox="0 0 19 17"><path fill="none" stroke="#484644" stroke-width="1.200" d="M7 14.500H1V1h17v5M1 12l5-6 4 5"/><circle fill="none" stroke="#484644" stroke-width="1.200" cx="14.500" cy="9.500" r="3"/><path stroke="#484644" stroke-width="1.200" d="M12.500 12L8.500 16"/></svg></div>
        <label>Image fit</label>
        <div class="box fit"><span>Normal</span><svg width="18" height="18"><use href="#vee"/></svg></div>
        <label class="tr">Transparency</label>
        <div class="slide"><div class="box num"><span>0 %</span><svg width="13" height="28" viewBox="0 0 13 28"><path fill="none" stroke="#605e5c" stroke-width="1.100" d="M1 8l5.500-6L12 8M1 20l5.500 6L12 20"/></svg></div><svg width="130" height="24" viewBox="0 0 130 24"><path stroke="#c8c6c4" stroke-width="6" d="M22 12h104"/><circle fill="#fff" stroke="#605e5c" stroke-width="2" cx="12" cy="12" r="9.500"/></svg></div>
      </div></div>
      <div class="scroll"></div>
    </div>
  </section>

  <section class="pane build">
    <div class="phead"><h2>Build</h2><svg width="24" height="6"><path fill="#252423" d="M1 1h2v2H1zM10 1h2v2h-2zM19 1h2v2h-2z"/></svg><svg width="20" height="20"><use href="#dbl"/></svg></div>
    <div class="sub">Suggestions</div>
    <div class="vis">
      <svg><use href="#stackbar"/></svg><svg><use href="#stackcol"/></svg><svg><use href="#clusbar2"/></svg><svg><use href="#cluscol2"/></svg><svg><use href="#fullbar"/></svg><svg><use href="#fullcol"/></svg>
      <svg><use href="#line"/></svg><svg><use href="#area"/></svg><svg><use href="#stackarea"/></svg><svg><use href="#fullarea"/></svg><svg><use href="#linestack"/></svg><svg><use href="#linecol"/></svg>
      <svg><use href="#ribbonc"/></svg><svg><use href="#waterfall"/></svg><svg><use href="#funnelc"/></svg><svg><use href="#scatter"/></svg><svg><use href="#pie"/></svg><svg><use href="#donut2"/></svg>
      <svg><use href="#treemap"/></svg><svg><use href="#globe"/></svg><svg><use href="#shapemap"/></svg><svg><use href="#azure"/></svg><svg><use href="#gauge"/></svg><svg><use href="#card"/></svg>
      <svg><use href="#multicard"/></svg><svg><use href="#kpi"/></svg><svg><use href="#slicer"/></svg><svg><use href="#table"/></svg><svg><use href="#matrix"/></svg><svg><use href="#rvis"/></svg>
      <svg><use href="#pyvis"/></svg><svg><use href="#influ"/></svg><svg><use href="#decomp"/></svg><svg><use href="#qna"/></svg><svg><use href="#narr"/></svg><svg><use href="#goals"/></svg>
      <svg><use href="#pagin"/></svg><svg><use href="#ncard"/></svg><svg><use href="#nslicer"/></svg><svg><use href="#more"/></svg>
    </div>
    <div class="sub dt">Data</div>
    <div class="drop"><div class="add">+Add data</div></div>
  </section>

  <aside class="rrail">
    <div class="rc"><svg width="30" height="30" viewBox="0 0 30 30"><path class="kw" d="M4.500 5v19q0 4 10.500 4t10.500-4V5"/><ellipse class="kw" cx="15" cy="5.500" rx="10.500" ry="4"/></svg></div>
    <div class="rc sel"><svg width="30" height="30" viewBox="0 0 30 30"><path class="kw" d="M2 12h7v16H2zM16 8h9v7h-9zM9 1h8v27H9z"/><path fill="#dfdedd" d="M13 11h17v19H13z"/><path fill="#fff" stroke="#d8650b" stroke-width="1.700" d="M15.500 14v12q0 3 6 3t6-3V14"/><ellipse fill="#fff" stroke="#d8650b" stroke-width="1.700" cx="21.500" cy="14" rx="6" ry="2.500"/></svg></div>
    <div class="rc sel"><svg width="30" height="30" viewBox="0 0 30 30"><path class="kw" d="M2 11h7v14H2zM16 8h9v7h-9zM9 1h8v20H9z"/><path fill="#fff" stroke="#3b3a39" stroke-width="1.500" d="M13 21L27 12l-9 13z"/><path class="b" d="M5 28q4-1 4-4 2-4 6-2 4 2 2 5-4 4-12 1z"/></svg></div>
    <div class="rc pl"><svg width="28" height="28"><path stroke="#252423" stroke-width="2" d="M13.500 1v26M0 14h26"/></svg></div>
    <div class="rc gear"><svg width="32" height="32" viewBox="0 0 32 32"><path class="gr" d="M12 2h2.500l1.500 2 1.500-2H20l3 5.500 4-.5 3 4.500-2.500 4.500 2.500 4.500-3 4.500-4-.5L20 30h-2.500L16 28l-1.500 2H12l-3-5.500-4 .5-3-4.500L4.500 16 2 11.500 5 7l4 .5z"/><circle class="gr" cx="16" cy="16" r="4.800"/></svg></div>
  </aside>
</main>

<footer class="status">
  <span>Page 4 of 8</span>
  <div class="zoom"><svg width="190" height="24" viewBox="0 0 190 24"><path stroke="#605e5c" stroke-width="2" d="M4 13h7M177 12h12M183 6v12"/><path stroke="#605e5c" d="M18 12.500h150"/><path fill="#605e5c" d="M58 4h6v17h-6zM92 8.500h2v7h-2z"/></svg><span>62%</span><svg width="25" height="19" viewBox="0 0 25 19"><path fill="none" stroke="#605e5c" stroke-width="1.500" d="M1 1h23v17H1zM4 7.500V4h4.500M16.500 4H21v3.500M21 11.500V15h-4.500M8.500 15H4v-3.500"/></svg></div>
</footer>

<footer class="taskbar">
  <svg class="t-wid" width="36" height="34" viewBox="0 0 36 34"><rect width="36" height="33" rx="2" fill="#0f62b4"/><rect x="3" y="3" width="13" height="27" rx="1.500" fill="#f5f5f5"/><path fill="#68d8ff" d="M19 3h14v15H19z"/><path fill="#1aa7f8" d="M19 18h14v6H19z"/><path fill="#0a82e8" d="M19 24h14v6H19z"/></svg>
  <svg class="t-win" width="36" height="36" viewBox="0 0 36 36"><path fill="url(#gWin)" d="M2 0h15v17H0V2q0-2 2-2zM18.500 0H34q1.500 0 1.500 2v15h-17zM0 18.500h17v17H2q-2 0-2-2zM18.500 18.500h17v15q0 2-1.500 2H18.500z"/></svg>
  <div class="tsearch"><svg width="24" height="24" viewBox="0 0 24 24"><circle cx="13.500" cy="9.500" r="8" fill="#ffffff22" stroke="#e8e8e8" stroke-width="2"/><path stroke="#e8e8e8" stroke-width="2.500" d="M8 15.500L1.500 22"/></svg><span>Search</span></div>
  <div class="apps">
    <div class="app"><svg viewBox="0 0 36 36"><path fill="#f4f4f4" d="M9 1h26v25H9z"/><path fill="#5c5c5c" d="M0 10h27v24H0z"/><path fill="#bcbcbc" d="M9 10h18v16H9z"/></svg></div>
    <div class="app"><svg viewBox="0 0 36 36"><path fill="url(#gChat)" d="M18 1a17 17 0 1 1-6 33L2 35l2-8A17 17 0 0 1 18 1z"/><rect x="8" y="11" width="14" height="14" rx="2.500" fill="#fff"/><path fill="#fff" d="M23 16l5-4v12l-5-4z"/></svg></div>
    <div class="app"><svg viewBox="0 0 36 36"><circle cx="18" cy="18" r="18" fill="#1068b8"/><path fill="url(#gEdge)" d="M0 17C1 6 9 0 18 0c10 0 18 7 18 15 0 7-6 10-14 8-2-1 1-2 1-5 0-4-4-6-9-6C7 12 2 14 0 17z"/><path fill="#1791e0" d="M0 17q5-6 13-5-5 4-4 11 2 9 11 13Q1 37 0 17z"/><path fill="#252a3a" d="M22 23q6 3 14-3l1 9-3 1q-7 3-12 1-5-3-6-8 1-5 5-5 2 3 1 5z"/><path fill="#1068b8" d="M17 24q4 8 17 4-6 8-16 8-6-5-1-12z"/></svg><i></i></div>
    <div class="app"><svg viewBox="0 0 36 36"><path fill="#d99a12" d="M0 3q0-1 1-1h10l4 4v6H0z"/><path fill="url(#gFold)" d="M0 8h12l4-3h20v29H0z"/><path fill="#0d6ebc" d="M6 34V27q0-3 3-3h18q3 0 3 3v7z"/><path stroke="#07508f" stroke-width="2" d="M12 29.500h12"/></svg></div>
    <div class="app"><svg viewBox="0 0 36 36"><path fill="none" stroke="#24a8f0" stroke-width="2.500" d="M10 9V2h17v7"/><path fill="#f0f1f2" d="M0 5h36v26q0 4-4 4H4q-4 0-4-4z"/><path fill="#f25022" d="M10 13h8v7h-8z"/><path fill="#7fba00" d="M19 13h7v7h-7z"/><path fill="#00a4ef" d="M10 21h8v7h-8z"/><path fill="#ffb900" d="M19 21h7v7h-7z"/></svg></div>
    <div class="app"><svg viewBox="0 0 36 36"><path fill="url(#gPub)" stroke="#e8f2f0" d="M1 30V11Q2 1 12 1h17v29z"/><path fill="#fff" d="M9 4l16 2v27L7 30z"/><path fill="#0a5f59" d="M12 8l10 1v5l-10-1z"/><path stroke="#0a5f59" stroke-width="2" d="M11 18l11 1M11 22l11 1M10 26l12 1"/><path fill="#fff" d="M23 10l11-1-2 26-9-4z"/><path stroke="#0a5f59" stroke-width="1.500" d="M26 14h6M26 18h6M25 22h6M25 26h6"/></svg></div>
    <div class="app"><svg viewBox="0 0 36 36"><path fill="url(#gXl)" stroke="#e8f2e0" d="M1 30V11Q2 1 12 1h18v29z"/><path fill="#f6fbf2" d="M7 5l28 3-1 26L5 30z"/><path fill="#4f9a37" d="M21 11h5v5h-5zM28 11h5v5h-5zM21 18h5v5h-5zM28 18h5v5h-5zM7 23h6v5H7zM14 24h6v5h-6zM21 25h5v5h-5zM28 25h5v6h-5z"/><path stroke="#1d6a1c" stroke-width="4" d="M9 8l10 13M19 8L8 21"/></svg><i></i></div>
    <div class="app"><svg viewBox="0 0 36 36"><path fill="#d4920f" d="M20 0h12v36H20z"/><path fill="#eab92a" d="M13 9h12v27H13z"/><path fill="#f8dc62" d="M4 18h13v18H4z"/></svg><i></i></div>
    <div class="app"><svg viewBox="0 0 36 36"><path fill="url(#gPpt)" stroke="#fdeee6" d="M1 30V11Q2 1 12 1h18v29z"/><path fill="#fff6f0" d="M7 6l28 3-1 26L5 30z"/><path fill="#d9431c" d="M9 10l22 2v17L9 27z"/><circle cx="23" cy="20" r="6" fill="#fff"/><path fill="#d9431c" d="M23 20v-6a6 6 0 0 1 6 6z"/><path stroke="#fff" stroke-width="2" d="M11 16h6M11 20h4M11 24h6"/></svg></div>
    <div class="app"><svg viewBox="0 0 36 36"><path fill="url(#gWd)" stroke="#e6eefa" d="M1 30V11Q2 1 12 1h18v29z"/><path fill="#f4f8fe" d="M7 5l28 3-2 27L5 30z"/><text x="10" y="20" font-size="15" font-weight="700" font-style="italic" fill="#1b4a9c">W</text><path stroke="#1b4a9c" stroke-width="2" d="M26 12h6M26 16h6M26 20h6M10 24l22 2M10 28l21 2"/></svg><i></i></div>
    <div class="app act"><svg viewBox="0 0 36 36"><rect width="27" height="27" rx="4" fill="#f4f4f6"/><path fill="#d83b01" d="M3 3h4v4H3zM9 3h4v4H9zM15 3h4v4h-4zM3 9h4v4H3zM3 15h4v4H3z"/><path fill="#9aa0a4" d="M19 8h4v16l-3 4-2-3zM10 19h9l8 1-2 3H10z"/><circle class="sn" cx="32" cy="19" r="3.500"/><circle class="sn" cx="20" cy="32" r="3.500"/></svg><i></i></div>
  </div>
  <div class="tray">
    <svg width="18" height="11"><path fill="none" stroke="#fff" stroke-width="1.600" d="M1 10l8-8 8 8"/></svg>
    <svg class="t-net" width="25" height="25" viewBox="0 0 25 25"><circle class="wl" cx="12" cy="12" r="11"/><path class="wl" d="M1 8.500h22M1 16h9M12 1q-9 11 0 22M12 1q5 5 5 9"/><circle cx="18" cy="18" r="8" fill="#2c163f"/><circle class="wl" cx="18" cy="18" r="6"/><path class="wl" d="M14 22l8-8"/></svg>
    <svg class="t-vol" width="25" height="22" viewBox="0 0 25 22"><path class="wl" d="M1 7h4l6-5v18l-6-5H1zM14 7q3 4 0 8M17 4q5 7 0 14"/><path class="wl dim" d="M20 1q7 10 0 20"/></svg>
    <svg class="t-bat" width="25" height="22" viewBox="0 0 25 22"><path class="wl" d="M10 5h11v14H7v-5M23 9v6"/><path fill="#fff" d="M12 8h2v8h-4v-4zM0 4h9v5q-1 4-3 4v6H4v-6q-3 0-4-4zM2 0h1.500v4H2zM6 0h1.500v4H6z"/></svg>
    <div class="clock">1:30 PM<br>11/5/2024</div>
    <span class="badge">4</span>
  </div>
</footer>
</body>
</html>
```
FILE: styles.css
```css
* { box-sizing: border-box; }
body { margin: 0; width: 1920px; height: 1080px; overflow: hidden; display: flex; flex-direction: column; font-family: "Open Sans", "Noto Sans", sans-serif; font-size: 17px; color: #252423; background: #f3f2f1; }
svg { display: block; flex: none; overflow: visible; }
.defs { position: absolute; }
.symbols { display: none; }
span, .row, .sub, label { white-space: nowrap; }
.k { fill: none; stroke: #3b3a39; stroke-width: 1.5; }
.dv { stroke-width: 1.8; }
.kk { fill: none; stroke: #252423; stroke-width: 2.3; }
.kw, .w { fill: #fff; stroke: #3b3a39; stroke-width: 1.5; }
.w { stroke-width: 1.3; }
.b { fill: #83beec; stroke: #0063b1; stroke-width: 1.4; }
.bl { fill: none; stroke: #1a86d0; stroke-width: 1.5; }
.g { fill: #c8c6c4; stroke: #797775; stroke-width: 1.3; }
.gw { fill: #fff; stroke: #797775; stroke-width: 1.3; }
.o { fill: #f9b25e; stroke: #d8650b; stroke-width: 1; }
.lb { fill: none; stroke: #9ccbe8; stroke-width: 1.6; }
.bolt { fill: #fcd47c; stroke: #d8650b; stroke-width: 1.3; }
.ti { fill: #1a86d0; }
.tb { font-weight: 700; }
.wl { fill: none; stroke: #fff; stroke-width: 1.5; }
.dim { opacity: .35; }
.uk { fill: none; stroke: #252423; stroke-width: 2; }
.rg { fill: none; stroke: #797775; stroke-width: 1.6; }
.gr { fill: none; stroke: #3b3a39; stroke-width: 2; stroke-linejoin: round; }
.mk { fill: #fff; stroke: #605e5c; stroke-width: 1.7; }
.fx { font: italic 28px "Liberation Serif", serif; fill: #b0aeac; }
.sn { fill: none; stroke: #2aa1e8; stroke-width: 2.4; }
.dax { font-size: 11px; font-weight: 600; fill: #797775; paint-order: stroke; stroke: #f3f2f1; stroke-width: 2px; }

.titlebar { height: 51px; flex: none; background: #3b3a37; color: #fff; display: flex; align-items: center; }
.ic-save { margin: 2px 0 0 24px; }
.ic-undo { margin: 2px 0 0 22px; }
.ic-redo { margin: 2px 0 0 22px; }
.doc { margin: 7px 0 0 13px; width: 561px; letter-spacing: .06px; }
.ic-caret { margin: 3px 0 0 11px; }
.topsearch { margin-left: 155px; width: 600px; height: 36px; border-radius: 3px; background: #d3d3d1; display: flex; align-items: center; padding: 1px 0 0 26px; gap: 17px; color: #2b5f54; font-size: 19px; }
.topsearch svg { color: #3b3a39; margin-top: -2px; }
.signin { margin: 1px 0 0 111px; width: 56px; }
.ic-user { margin-left: 14px; }
.ic-win { margin-left: 46px; margin-top: 5px; }

.tabs { height: 47px; flex: none; background: #fafafa; display: flex; font-size: 19px; line-height: 48px; }
.tab { display: block; text-align: center; letter-spacing: -.1px; }
.t-file { width: 99px; }
.tab.on { width: 102px; font-weight: 600; background: linear-gradient(#117865, #117865) 11px 42px / 80px 5px no-repeat #f3f3f3; }
.t-ins { width: 101px; }
.t-mod { width: 134px; }
.t-view { width: 94px; }
.t-opt { width: 128px; }
.t-help { width: 94px; }
.share { margin: 6px 9px 0 auto; width: 125px; height: 36px; border: 0; border-radius: 6px; background: #117865; color: #fff; font: 17px "Open Sans", sans-serif; display: flex; align-items: center; padding: 0 0 0 9px; gap: 7px; }
.share span { margin-left: 5px; width: 46px; letter-spacing: -.2px; }

.ribbon { height: 142px; flex: none; background: #fafafa; display: flex; padding-top: 7px; position: relative; z-index: 2; box-shadow: 0 2px 5px #0003; color: #3b3a39; }
.group { height: 133px; border-right: 1px solid #d2d0ce; display: flex; flex-direction: column; justify-content: space-between; }
.tools { display: flex; height: 112px; }
.glabel { text-align: center; font-size: 14px; line-height: 16px; letter-spacing: -.1px; height: 16px; }
.big { padding-top: 7px; display: flex; flex-direction: column; align-items: center; gap: 3px; flex: none; }
.big span { line-height: 24px; text-align: center; letter-spacing: -.1px; }
.cv { display: inline-block; margin-left: 2px; }
.off { color: #c4c2c0; }
.g-clip { width: 121px; }
.g-clip .big { width: 60px; margin-left: 12px; }
.minis { margin: 6px 0 0 6px; display: flex; flex-direction: column; gap: 12px; }
.g-data { width: 461px; }
.g-data .big { width: 76px; margin-left: 3px; }
.rows { display: flex; flex-direction: column; }
.r1 { width: 199px; }
.row { height: 36px; display: flex; align-items: center; gap: 4px; letter-spacing: -.05px; }
.r2 .row { gap: 6px; }
.row .cv { margin: 4px 0 0 3px; }
.r2 .row .cv { margin: 0; }
.g-query { width: 173px; }
.b-tr { width: 86px; margin-left: 12px; }
.b-rf { width: 60px; }
.g-ins { width: 612px; }
.b-nv { width: 70px; margin-left: 7px; }
.gallery { margin: 10px 0 0 1px; width: 380px; height: 93px; border: 1px solid #8a8886; background: #fff; display: flex; }
.ggrid { flex: 1; display: grid; grid-template-columns: repeat(9, 24px); grid-template-rows: 24px 24px; column-gap: 15px; row-gap: 20px; padding: 11px 0 0 9px; }
.ggrid svg { width: 24px; height: 24px; }
.gmore { width: 25px; border-left: 1px solid #8a8886; background: #fafafa; display: flex; align-items: center; justify-content: center; }
.b-tx { width: 72px; }
.b-mv { width: 62px; }
.g-calc { width: 278px; }
.b-nc { width: 112px; margin-left: 9px; }
.b-nc span, .b-mv span { margin-left: -2px; }
.b-nm { width: 70px; }
.b-qm { width: 76px; }
.g-sens { width: 110px; }
.g-sens .big { width: 108px; }
.g-share { width: 87px; }
.g-share .big { width: 86px; }
.g-cop { width: 48px; border: 0; overflow: hidden; }
.g-cop .big { align-items: flex-start; padding-left: 15px; }
.g-cop .big svg { margin-left: 5px; }
.g-cop .glabel { padding-left: 19px; text-align: left; }
.collapse { margin: 116px 0 0 8px; }

.work { height: 732px; flex: none; display: flex; }
.rail { width: 61px; flex: none; border-right: 1px solid #e1dfdd; }
.cell { height: 60px; display: flex; align-items: center; padding-left: 15px; }
.cell.on { border-left: 4px solid #117865; }
.cell:nth-child(2) { padding: 0 0 4px 17px; }
.c3 { padding-bottom: 3px; }
.center { width: 1269px; flex: none; display: grid; grid-template-columns: 1219px 50px; grid-template-rows: 679px 53px; }
.canvas { background: #000; padding-left: 14px; overflow: hidden; }
.page { width: 1190px; height: 670px; padding: 4px 7px 0;
  background:
    repeating-linear-gradient(#6f6f6f 0 3px, transparent 3px 6px) left / 3px 100% no-repeat,
    repeating-linear-gradient(#6f6f6f 0 3px, transparent 3px 6px) right / 3px 100% no-repeat,
    repeating-linear-gradient(90deg, #6f6f6f 0 3px, transparent 3px 6px) bottom / 100% 3px no-repeat; }
.cards { display: grid; grid-template-columns: repeat(3, 352px); gap: 8px; }
.card { width: 352px; height: 187px; background: #2b0a0b; border-radius: 21px; }
.row3 { display: flex; align-items: flex-start; justify-content: space-between; width: 1074px; margin-top: 8px; }
.tall { height: 194px; }
.slicer { width: 407px; height: 103px; border-radius: 21px; background: #38060a; color: #b5502c; padding: 11px 20px 0; }
.sl-h { display: flex; justify-content: space-between; align-items: center; font: 500 13px/18px Roboto, sans-serif; letter-spacing: .02px; color: #ae4524; }
.sl-h svg, .sl-r svg { color: #7c5c5c; }
.sl-r { height: 27px; display: flex; align-items: center; font-size: 14.500px; }
.sl-r svg { margin-left: -1px; margin-right: 1px; }
.sl-r i { width: 15px; height: 15px; border: 1px solid #8a7f7a; margin: 0 7px 0 6px; }
.banner { margin: 11px 0 0 512px; width: 664px; height: 62px; border-radius: 21px; background: #2a080a; color: #b5431d; font-size: 15px; line-height: 32px; text-align: center; letter-spacing: -.38px; }
.card text { font-family: "Open Sans", sans-serif; }
.card .ct { font: 500 14.500px Roboto, sans-serif; fill: #a94222; }
.ax { font-size: 11px; fill: #fff; }
.card .at { font: 500 10px Roboto, sans-serif; fill: #e8694a; }
.card .li { fill: #f09272; }
.e { text-anchor: end; }
.m { text-anchor: middle; }
.bd { font-weight: 700; }
.gy { fill: #6a605e; }
.ln { fill: none; stroke-width: 2.800; stroke-linecap: round; }

.filters { background: #fff; border-left: 1px solid #a19f9d; border-right: 1px solid #e1dfdd; display: flex; flex-direction: column; align-items: center; padding-top: 19px; }
.flip { transform: scaleX(-1); }
.filters svg + svg { margin: 22px 0 0 5px; }
.filters span { writing-mode: vertical-rl; font-size: 20.500px; font-weight: 600; line-height: 24px; margin-top: 12px; }
.pagetabs { grid-column: 1 / 3; display: flex; border-bottom: 1px solid #d8d6d4; }
.views { width: 191px; }
.pt { width: 114.600px; border-left: 1px solid #c8c6c4; background: #fff; text-align: center; line-height: 55px; height: 53px; letter-spacing: -.1px; }
.pt.on { font-weight: 600; letter-spacing: -.25px; background: linear-gradient(#117865, #117865) 0 100% / 100% 6px no-repeat #fff; }
.plus { width: 60px; background: #117865; display: flex; align-items: center; justify-content: center; }

.pane { width: 271px; flex: none; border-right: 1px solid #e1dfdd; padding: 0 12px; }
.phead { display: flex; align-items: center; height: 58px; }
.phead h2 { margin: 0 auto 0 0; font-size: 23px; font-weight: 600; letter-spacing: -.5px; line-height: 58px; }
.phead svg + svg { margin-left: 11px; margin-top: -1px; }
.psearch { height: 40px; margin-top: 4px; border: 1px solid #797775; border-radius: 3px; display: flex; align-items: center; gap: 9px; padding: 1px 0 0 11px; font-size: 19px; color: #484644; width: 246px; }
.psearch svg { margin-top: -2px; }
.acc { position: relative; margin: 17px -12px 0; }
.item { height: 61px; border-bottom: 1px solid #dddbd9; display: flex; align-items: center; gap: 5px; padding-left: 12px; font-weight: 600; font-size: 17px; letter-spacing: -.1px; }
.rt { transform: rotate(-90deg); }
.item.last { border: 0; }
.well { background: #dfdedd; height: 357px; padding: 11px 12px 0; }
.form { background: #f3f2f1; border-radius: 7px 7px 0 0; height: 346px; padding: 13px 12px 0; box-shadow: 0 0 3px #0003; width: 246px; color: #3b3a39; }
.form label { display: block; line-height: 24px; height: 29px; }
.box { border: 1px solid #797775; border-radius: 3px; background: #fff; display: flex; align-items: center; justify-content: space-between; padding: 0 7px; height: 36px; }
.color { width: 78px; margin-bottom: 13px; padding: 0 6px; }
.color b { width: 24px; height: 24px; background: #000; border: 1px solid #8a8886; }
.browse { height: 38px; margin-bottom: 13px; }
.fit { background: transparent; border-color: #bdbbb9; color: #a19f9d; padding: 0 9px 0 12px; margin-bottom: 18px; }
.fit svg { color: #484644; }
.form .tr { height: 39px; }
.slide { display: flex; align-items: center; gap: 5px; }
.num { width: 82px; padding: 0 3px 0 7px; color: #605e5c; }
.scroll { position: absolute; right: 0; top: 0; width: 9px; height: 458px; border-radius: 5px; background: #c8c6c4; }
.sub { line-height: 24px; margin: -1px 0 5px; }
.vis { border: 1px solid #797775; border-radius: 3px; background: #fff; width: 246px; height: 281px; display: grid; grid-template-columns: repeat(6, 28px); grid-auto-rows: 28px; gap: 10.900px 11.200px; padding: 9px 0 0 10px; }
.vis svg { width: 28px; height: 28px; }
.dt { margin: 13px 0 5px; }
.drop { width: 246px; height: 58px; border: 1px dashed #605e5c; padding: 6px; background: #fff; border-radius: 3px; }
.add { height: 44px; border: 1px solid #605e5c; border-radius: 3px; text-align: center; line-height: 43px; font-weight: 600; }
.rrail { flex: 1; background: #faf9f8; display: flex; flex-direction: column; }
.rc { height: 48px; display: flex; align-items: center; justify-content: center; }
.rc.sel { background: #dfdedd; border: 1px solid #605e5c; }
.pl { height: 46px; }
.gear { margin-top: auto; border-top: 1px solid #e1dfdd; }

.status { height: 35px; flex: none; border-bottom: 1px solid #000; border-top: 1px solid #e1dfdd; display: flex; align-items: center; justify-content: space-between; padding: 1px 27px 0 6px; color: #484644; font-size: 17px; }
.status > span { margin-top: 3px; letter-spacing: .15px; }
.zoom { display: flex; align-items: center; color: #605e5c; }
.zoom span { margin: 0 29px 0 19px; width: 34px; letter-spacing: -.4px; }

.taskbar { flex: 1; color: #fff; display: flex; align-items: center; padding-top: 2px; background: linear-gradient(90deg, #1e2625 0, #1e2725 25%, #122a3a 32%, #13264f 38.500%, #272438 42%, #262a38 50%, #2a1f4a 57%, #2d1370 61%, #331350 70%, #2e1445 85%, #241a33 100%); }
.t-wid { margin-left: 24px; }
.t-win { margin-left: 351px; }
.tsearch { margin-left: 19px; width: 328px; height: 48px; border-radius: 24px; background: #ffffff1f; border: 1px solid #ffffff10; display: flex; align-items: center; padding-left: 17px; gap: 13px; color: #d4d8da; font-size: 19px; letter-spacing: -.1px; }
.apps { display: flex; margin-left: 8px; }
.app { width: 60px; height: 60px; margin-right: 6px; position: relative; display: flex; align-items: center; justify-content: center; border-radius: 5px; }
.app svg { width: 36px; height: 36px; }
.app i { position: absolute; bottom: 1px; left: 26px; width: 9px; height: 5px; border-radius: 3px; background: #a9a0b8; }
.act { background: #ffffff14; border: 1px solid #ffffff14; }
.act i { left: 17px; width: 24px; background: #dda0e4; bottom: 0; }
.tray { margin-left: auto; display: flex; align-items: center; padding-right: 30px; }
.t-net { margin-left: 21px; }
.t-vol { margin-left: 11px; }
.t-bat { margin-left: 12px; }
.clock { width: 98px; text-align: right; font-size: 16.500px; line-height: 23.500px; letter-spacing: -.05px; }
.badge { margin-left: 11px; width: 24px; height: 24px; border-radius: 50%; background: #d9a0e4; color: #222; font-size: 14px; line-height: 24px; text-align: center; }
```
